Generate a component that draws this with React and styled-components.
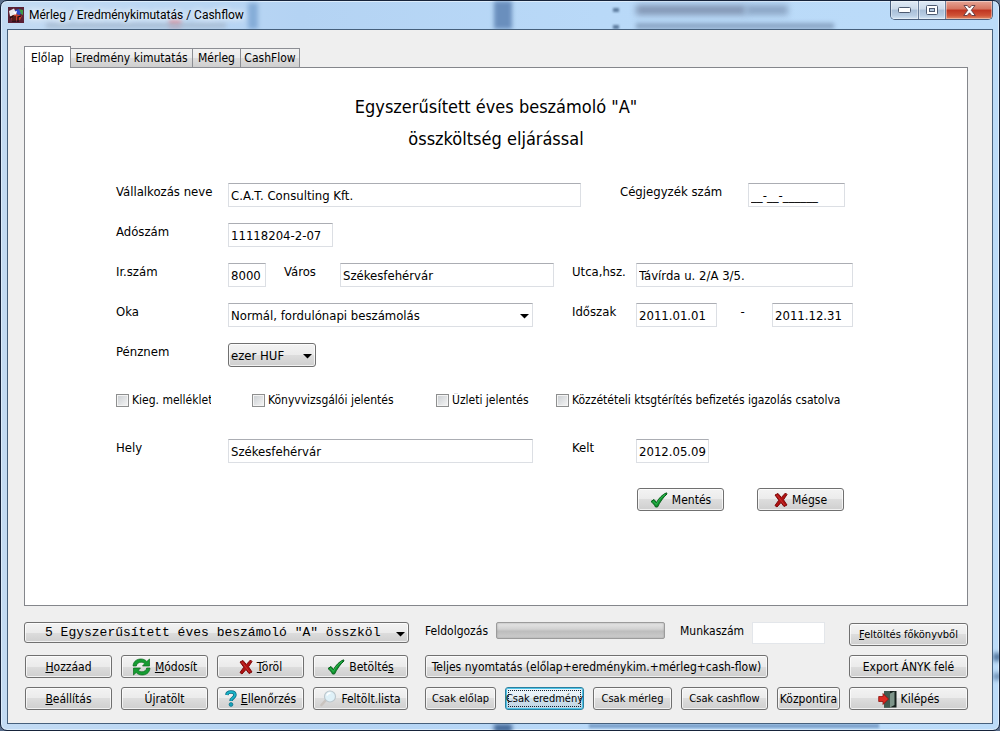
import React from 'react';
import styled, { createGlobalStyle, css } from 'styled-components';

const GlobalStyle = createGlobalStyle`
  * {
    box-sizing: border-box;
  }
  body {
    margin: 0;
    background: #5b6f8c;
  }
  body, button, input, select {
    font-family: 'DejaVu Sans Condensed', 'DejaVu Sans', sans-serif;
    font-size: 12px;
    color: #000;
  }
`;

/* Window frame */

const Window = styled.div`
  position: relative;
  display: flex;
  flex-direction: column;
  min-height: 100vh;
  padding: 0 6px 6px;
  border: 1px solid #16233a;
  border-radius: 7px;
  overflow: hidden;
  box-shadow: inset 0 0 0 1px #dcecfb;
  background: linear-gradient(90deg, #c3dbf3 0%, #b4d3f3 30%, #b9d9f8 60%, #bcdcf9 100%);
`;

const Smudge = styled.span`
  position: absolute;
  left: ${(props) => props.$x}px;
  top: ${(props) => props.$y}px;
  width: ${(props) => props.$w}px;
  height: ${(props) => props.$h}px;
  background: ${(props) => props.$color};
  filter: blur(${(props) => props.$blur || 2}px);
`;

const TitleBar = styled.header`
  position: relative;
  display: flex;
  align-items: flex-start;
  height: 28px;
  padding-left: 1px;
`;

const Caption = styled.h1`
  display: flex;
  align-items: center;
  gap: 5px;
  flex: 1;
  margin: 0;
  height: 28px;
  font: 12px Roboto, sans-serif;
  text-shadow: 0 0 6px #fff, 0 0 8px #fff;
`;

const CaptionButtons = styled.div`
  display: flex;
  height: 19px;
  border: 1px solid #4a5f7c;
  border-top: 0;
  border-radius: 0 0 5px 5px;
  overflow: hidden;
`;

const CaptionButton = styled.button`
  display: flex;
  align-items: center;
  justify-content: center;
  width: ${(props) => (props.$close ? 47 : 27)}px;
  padding: 0;
  border: 0;
  border-left: ${(props) => (props.$first ? '0' : '1px solid #6a7f9b')};
  background: ${(props) =>
    props.$close
      ? 'linear-gradient(#e6a596, #d5745f 45%, #bf3420 50%, #cf5236 80%, #e08a66)'
      : 'linear-gradient(#dfeaf5, #cbdaea 45%, #a9bfd8 50%, #b8cde3 80%, #d5e6f5)'};
  box-shadow: inset 0 0 0 1px rgba(255, 255, 255, 0.4);
`;

const Client = styled.main`
  display: flex;
  flex-direction: column;
  flex: 1;
  position: relative;
  padding: 16px 24px 13px 16px;
  border: 1px solid #46607c;
  background: #efefef;
`;

/* Tabs */

const Tabs = styled.nav`
  display: flex;
  align-items: flex-end;
  height: 22px;
  margin-bottom: -1px;
  position: relative;
`;

const Tab = styled.button`
  height: 20px;
  padding: 0;
  width: ${(props) => props.$width}px;
  border: 1px solid #8c8e94;
  margin-left: -1px;
  line-height: 18px;
  white-space: nowrap;
  background: linear-gradient(#f2f2f2, #ebebeb 50%, #dddddd 50%, #cfcfcf);
  ${(props) =>
    props.$active &&
    css`
      height: 22px;
      margin-left: 0;
      border-bottom: 0;
      background: #fff;
    `}
`;

const Panel = styled.section`
  flex: 1;
  padding: 23px 114px 24px 91px;
  border: 1px solid #84868b;
  background: #fff;
`;

const Heading = styled.h2`
  margin: 0 -114px 28px -91px;
  text-align: center;
  font-size: 18px;
  font-weight: normal;
  line-height: 32px;
`;

/* Form */

const Form = styled.form`
  display: flex;
  flex-direction: column;
  gap: 16px;
`;

const Row = styled.div`
  display: flex;
  height: 24px;
  padding-right: ${(props) => props.$end || 0}px;
  font-size: 13px;
`;

const Label = styled.label`
  flex: none;
  width: ${(props) => props.$width || 112}px;
  margin-left: ${(props) => props.$gap || 0}px;
  line-height: 18px;
  white-space: nowrap;
`;

const fieldBox = css`
  flex: ${(props) => (props.$width ? `0 0 ${props.$width}px` : '1 1 0')};
  width: ${(props) => (props.$width ? `${props.$width}px` : 'auto')};
  min-width: 0;
  height: 24px;
`;

const Input = styled.input`
  ${fieldBox}
  padding: 0 2px;
  border: 1px solid #dcdfe4;
  border-top-color: #abadb3;
  background: #fff;
  font-size: 13px;
`;

const JobInput = styled(Input)`
  height: 22px;
  border-color: #e3e6ea;
`;

const Dash = styled.span`
  flex: 0 0 55px;
  padding-right: 4px;
  line-height: 18px;
  text-align: center;
`;

const raised = css`
  border: 1px solid #707070;
  border-radius: 3px;
  background: linear-gradient(#f3f3f3, #ebebeb 50%, #dddddd 50%, #cfcfcf);
  box-shadow: inset 0 0 0 1px rgba(255, 255, 255, 0.7);
`;

const SelectBox = styled.div`
  ${fieldBox}
  position: relative;

  svg {
    position: absolute;
    right: 4px;
    top: 50%;
    margin-top: -1px;
    pointer-events: none;
  }
`;

const TypeSelectBox = styled(SelectBox)`
  height: 21px;
`;

const Select = styled.select`
  appearance: none;
  display: block;
  width: 100%;
  height: 100%;
  padding: 0 16px 0 2px;
  border: 1px solid #dcdfe4;
  border-top-color: #abadb3;
  border-radius: 0;
  background: #fff;
  font-size: 13px;
  ${(props) => props.$raised && raised}
  ${(props) =>
    props.$mono &&
    css`
      padding-left: 20px;
      font-family: 'Liberation Mono', monospace;
    `}
`;

const CheckRow = styled.div`
  display: flex;
  height: 14px;
  margin: 10px 0 16px;
`;

const Check = styled.label`
  display: flex;
  align-items: center;
  gap: 3px;
  flex: none;
  width: ${(props) => props.$width}px;
  margin-right: ${(props) => props.$gap || 0}px;
  white-space: nowrap;
  overflow: hidden;
  line-height: 16px;

  input {
    appearance: none;
    flex: none;
    width: 13px;
    height: 13px;
    margin: 0;
    border: 1px solid #8e8f8f;
    background: linear-gradient(135deg, #c9cdd1, #f6f6f6);
    box-shadow: inset 0 0 0 1px #f4f4f4;
  }
`;

const FormActions = styled.div`
  display: flex;
  justify-content: flex-end;
  gap: 33px;
  margin-top: 9px;
  padding-right: 9px;
`;

const Button = styled.button`
  ${raised}
  display: flex;
  align-items: center;
  justify-content: center;
  gap: 4px;
  width: ${(props) => (props.$width ? `${props.$width}px` : 'auto')};
  min-width: 0;
  height: 23px;
  padding: 0;
  white-space: nowrap;
  overflow: hidden;
  font-size: ${(props) => (props.$small ? 11 : 12)}px;

  svg {
    flex: none;
  }
  ${(props) =>
    props.$focused &&
    css`
      border-color: #2c7f9e;
      background: linear-gradient(#eef5fa, #e2eef6 50%, #cfe1ec 50%, #bfd5e4);
      box-shadow: inset 0 0 0 1px #4fc4e8;
      outline: 1px dotted #123;
      outline-offset: -4px;
    `}
`;

/* Bottom bar */

const Footer = styled.footer`
  display: grid;
  grid-template-columns: 385px minmax(0, 1fr) 119px;
  column-gap: 9px;
  margin-top: 16px;
`;

const Stack = styled.div`
  display: grid;
  grid-template-rows: 24px 23px 23px;
  row-gap: 9px;
  padding-left: ${(props) => props.$inset || 0}px;
`;

const Cells = styled.div`
  display: grid;
  grid-template-columns: ${(props) => props.$columns};
  column-gap: 9px;
  padding-left: ${(props) => props.$inset || 0}px;
`;

const StatusRow = styled.div`
  display: flex;
  padding-right: 15px;
`;

const Progress = styled.div`
  flex: 1;
  height: 17px;
  border: 1px solid #9b9b9b;
  border-radius: 2px;
  background: linear-gradient(#e6e6e6, #d2d2d2 40%, #bdbdbd 55%, #cdcdcd);
  box-shadow: inset 0 0 2px #9d9d9d;
`;

const ImportButton = styled(Button)`
  align-self: end;
`;

/* Icons */

const Arrow = () => (
  <svg width="9" height="5" viewBox="0 0 9 5">
    <path d="M0 0h9L4.500 4.500z" fill="#000" />
  </svg>
);

const CheckIcon = () => (
  <svg width="18" height="16" viewBox="0 0 18 16">
    <path d="M1 9.500L4 7.500L6.500 10.500C9 6 12.500 2.500 16.500 .8L17 2C13 5.500 10 10 7.500 15H5.500C4.500 13 3 11 1 9.500z" fill="#0f9430" stroke="#075f19" strokeWidth="1" />
    <path d="M3 9.300L6.300 12.500C9 7.500 12 4.500 15 2.500" fill="none" stroke="#2fb850" strokeWidth="1" />
  </svg>
);

const CrossIcon = () => (
  <svg width="14" height="16" viewBox="0 0 14 16">
    <path d="M1 3L4 1.500L7.300 5.500L11.500 1L13 2.500L9.500 7.800L13 13L10 14.500L7 10.500L3 15L1 13.500L4.800 8.200z" fill="#b01212" stroke="#7d0909" strokeWidth="1" />
    <path d="M3 3.200L10.500 13" stroke="#c93434" strokeWidth=".9" />
  </svg>
);

const RefreshIcon = () => (
  <svg width="19" height="18" viewBox="0 0 19 18">
    <path d="M1 8C1.500 3 5 1 9 1C11.500 1 13.500 2 14.800 3.500L17.500 1V8H10.500L12.600 5.700C11.500 4.600 10.500 4.200 9 4.200C6.500 4.200 5 5.500 4.300 8z" fill="#169c32" stroke="#0a6a1d" strokeWidth=".7" />
    <path d="M18 10C17.500 15 14 17 10 17C7.500 17 5.500 16 4.200 14.500L1.500 17V10H8.500L6.400 12.300C7.500 13.400 8.500 13.800 10 13.800C12.500 13.800 14 12.500 14.700 10z" fill="#169c32" stroke="#0a6a1d" strokeWidth=".7" />
  </svg>
);

const HelpIcon = () => (
  <svg width="12" height="17" viewBox="0 0 12 17">
    <path d="M1.800 5C2 2.800 3.800 2 6 2C8.500 2 10 3.200 10 5C10 7.800 6 7.800 6 11" fill="none" stroke="#0c6c84" strokeWidth="3.400" />
    <path d="M1.800 4.800C2.200 2.800 3.800 2 6 2C8.500 2 10 3.200 10 5C10 7.800 6 7.800 6 10.800" fill="none" stroke="#19b3c8" strokeWidth="1.800" />
    <circle cx="6" cy="14.500" r="1.900" fill="#16a3ba" stroke="#0c6c84" strokeWidth=".7" />
  </svg>
);

const SearchIcon = () => (
  <svg width="17" height="17" viewBox="0 0 17 17">
    <path d="M6 10L1.500 15" stroke="#c9c3be" strokeWidth="2.600" strokeLinecap="round" />
    <circle cx="10" cy="6.500" r="5.500" fill="#dff1f8" stroke="#bcc7cd" strokeWidth="1.200" />
    <path d="M6.800 5.500C7.500 3.800 9 3 10.500 3" fill="none" stroke="#fff" strokeWidth="1.500" />
  </svg>
);

const ExitIcon = () => (
  <svg width="19" height="18" viewBox="0 0 19 18">
    <path d="M6 1H18.500V17.500H6z" fill="#16211d" />
    <path d="M6 1H12V17.500H6z" fill="#3f5a50" />
    <path d="M12 3.500L16.500 1.500V15L12 17.500z" fill="#7d9489" />
    <path d="M.7 6.500H5V3.500L10.500 9L5 14.500V11.500H.7z" fill="#dc2a22" stroke="#8c100c" strokeWidth=".8" />
  </svg>
);

const AppIcon = () => (
  <svg width="16" height="16" viewBox="0 0 16 16">
    <path d="M0 0H16V16H0z" fill="#5a2034" />
    <path d="M1 4L6 1.500L8 6L6 10L2 9z" fill="#e9e9ee" />
    <path d="M7 3L11 2L14 6L10 9z" fill="#2c49c9" />
    <path d="M11 2L15 3V8L13 7z" fill="#3d9a46" />
    <path d="M3 9L8 7L14 9L12 13L4 14z" fill="#c7402c" />
    <path d="M2 11L5 9V15M7 9V15M10 15V10L13 9" fill="none" stroke="#1a0a12" strokeWidth="1.300" />
    <path d="M5 5L9 4L8 8z" fill="#fff" />
  </svg>
);

const MinimizeIcon = () => (
  <svg width="13" height="6" viewBox="0 0 13 6">
    <rect x=".5" y=".5" width="12" height="5" rx="1" fill="#fff" stroke="#4d5a70" />
  </svg>
);

const MaximizeIcon = () => (
  <svg width="12" height="10" viewBox="0 0 12 10">
    <rect x=".5" y=".5" width="11" height="9" rx="1" fill="#fff" stroke="#4d5a70" />
    <rect x="3.500" y="3.500" width="5" height="3" fill="#b4c8de" stroke="#4d5a70" />
  </svg>
);

const CloseIcon = () => (
  <svg width="13" height="11" viewBox="0 0 13 11">
    <path d="M1 .5H4.300L6.500 3L8.700 .5H12L8.300 5.300L12.300 10.500H8.800L6.500 7.800L4.200 10.500H.7L4.700 5.300z" fill="#fff" stroke="#5c3a42" strokeWidth=".9" />
  </svg>
);

const smudges = [
  { x: 247, y: 2, w: 10, h: 26, color: '#86add8' },
  { x: 168, y: 19, w: 12, h: 7, color: '#d77a8c' },
  { x: 45, y: 22, w: 180, h: 5, color: '#a9bdd3' },
  { x: 493, y: 0, w: 18, h: 28, color: '#6a8fbd' },
  { x: 612, y: 7, w: 6, h: 4, color: '#5e7d9f', blur: 1 },
  { x: 612, y: 24, w: 6, h: 4, color: '#5e7d9f', blur: 1 },
  { x: 635, y: 4, w: 110, h: 10, color: '#8296b4', blur: 3 },
  { x: 745, y: 4, w: 42, h: 10, color: '#8ba5c4', blur: 3 },
  { x: 635, y: 22, w: 198, h: 6, color: '#8aa5c4', blur: 2 },
  { x: 493, y: 723, w: 18, h: 8, color: '#456a99' },
  { x: 588, y: 723, w: 290, h: 4, color: '#7ea3cc', blur: 1 },
  { x: 992, y: 652, w: 8, h: 8, color: '#54779f' },
  { x: 992, y: 672, w: 8, h: 7, color: '#7193b8' },
];

const App = () => {
  return (
    <>
      <GlobalStyle />
      <Window>
        {smudges.map((s) => (
          <Smudge key={`${s.x}-${s.y}`} $x={s.x} $y={s.y} $w={s.w} $h={s.h} $color={s.color} $blur={s.blur} />
        ))}
        <TitleBar>
          <Caption>
            <AppIcon />
            Mérleg / Eredménykimutatás / Cashflow
          </Caption>
          <CaptionButtons>
            <CaptionButton $first aria-label="Kis méret"><MinimizeIcon /></CaptionButton>
            <CaptionButton aria-label="Teljes méret"><MaximizeIcon /></CaptionButton>
            <CaptionButton $close aria-label="Bezárás"><CloseIcon /></CaptionButton>
          </CaptionButtons>
        </TitleBar>

        <Client>
          <Tabs>
            <Tab $active $width={47}>Előlap</Tab>
            <Tab $width={123}>Eredmény kimutatás</Tab>
            <Tab $width={49}>Mérleg</Tab>
            <Tab $width={60}>CashFlow</Tab>
          </Tabs>

          <Panel>
            <Heading>
              Egyszerűsített éves beszámoló "A"
              <br />
              összköltség eljárással
            </Heading>

            <Form onSubmit={(e) => e.preventDefault()}>
              <Row $end={8}>
                <Label htmlFor="nev">Vállalkozás neve</Label>
                <Input id="nev" defaultValue="C.A.T. Consulting Kft." />
                <Label htmlFor="cegjegyzek" $gap={39} $width={128}>Cégjegyzék szám</Label>
                <Input id="cegjegyzek" $width={97} defaultValue="__-__-______" />
              </Row>
              <Row>
                <Label htmlFor="adoszam">Adószám</Label>
                <Input id="adoszam" $width={105} defaultValue="11118204-2-07" />
              </Row>
              <Row>
                <Label htmlFor="irszam">Ir.szám</Label>
                <Input id="irszam" $width={38} defaultValue="8000" />
                <Label htmlFor="varos" $gap={18} $width={56}>Város</Label>
                <Input id="varos" defaultValue="Székesfehérvár" />
                <Label htmlFor="utca" $gap={18} $width={64}>Utca,hsz.</Label>
                <Input id="utca" $width={217} defaultValue="Távírda u. 2/A 3/5." />
              </Row>
              <Row>
                <Label htmlFor="oka">Oka</Label>
                <SelectBox>
                  <Select id="oka">
                    <option>Normál, fordulónapi beszámolás</option>
                  </Select>
                  <Arrow />
                </SelectBox>
                <Label htmlFor="tol" $gap={39} $width={64}>Időszak</Label>
                <Input id="tol" $width={81} defaultValue="2011.01.01" />
                <Dash>-</Dash>
                <Input aria-label="Időszak vége" $width={81} defaultValue="2011.12.31" />
              </Row>
              <Row>
                <Label htmlFor="penznem">Pénznem</Label>
                <SelectBox $width={88}>
                  <Select id="penznem" $raised>
                    <option>ezer HUF</option>
                  </Select>
                  <Arrow />
                </SelectBox>
              </Row>

              <CheckRow>
                <Check $width={95} $gap={41}><input type="checkbox" />Kieg. melléklet</Check>
                <Check $width={146} $gap={38}><input type="checkbox" />Könyvvizsgálói jelentés</Check>
                <Check $width={97} $gap={23}><input type="checkbox" />Üzleti jelentés</Check>
                <Check $width={297}><input type="checkbox" />Közzétételi ktsgtérítés befizetés igazolás csatolva</Check>
              </CheckRow>

              <Row $end={144}>
                <Label htmlFor="hely">Hely</Label>
                <Input id="hely" defaultValue="Székesfehérvár" />
                <Label htmlFor="kelt" $gap={39} $width={64}>Kelt</Label>
                <Input id="kelt" $width={73} defaultValue="2012.05.09" />
              </Row>

              <FormActions>
                <Button $width={87}><CheckIcon />Mentés</Button>
                <Button $width={87}><CrossIcon />Mégse</Button>
              </FormActions>
            </Form>
          </Panel>

          <Footer>
            <Stack>
              <TypeSelectBox>
                <Select $raised $mono aria-label="Beszámoló">
                  <option>5 Egyszerűsített éves beszámoló "A" összköl</option>
                </Select>
                <Arrow />
              </TypeSelectBox>
              <Cells $columns="87px 87px 87px 95px" $inset={1}>
                <Button><span><u>H</u>ozzáad</span></Button>
                <Button><RefreshIcon /><span><u>M</u>ódosít</span></Button>
                <Button><CrossIcon /><span><u>T</u>öröl</span></Button>
                <Button><CheckIcon /><span>Betölté<u>s</u></span></Button>
              </Cells>
              <Cells $columns="87px 87px 87px 95px" $inset={1}>
                <Button><span><u>B</u>eállítás</span></Button>
                <Button>Újratölt</Button>
                <Button><HelpIcon /><span><u>E</u>llenőrzés</span></Button>
                <Button><SearchIcon />Feltölt.lista</Button>
              </Cells>
            </Stack>

            <Stack $inset={7}>
              <StatusRow>
                <Label as="span" $width={71}>Feldolgozás</Label>
                <Progress role="progressbar" aria-label="Feldolgozás" />
                <Label htmlFor="munkaszam" $gap={15} $width={72}>Munkaszám</Label>
                <JobInput id="munkaszam" $width={73} />
              </StatusRow>
              <Button $width={343}>Teljes nyomtatás (előlap+eredménykim.+mérleg+cash-flow)</Button>
              <Cells $columns="71fr 79fr 79fr 87fr 63fr">
                <Button $small>Csak előlap</Button>
                <Button $small $focused>Csak eredmény</Button>
                <Button $small>Csak mérleg</Button>
                <Button $small>Csak cashflow</Button>
                <Button>Központira</Button>
              </Cells>
            </Stack>

            <Stack>
              <ImportButton $small><span><u>F</u>eltöltés főkönyvből</span></ImportButton>
              <Button>Export ÁNYK felé</Button>
              <Button><ExitIcon />Kilépés</Button>
            </Stack>
          </Footer>
        </Client>
      </Window>
    </>
  );
};

export default App;
